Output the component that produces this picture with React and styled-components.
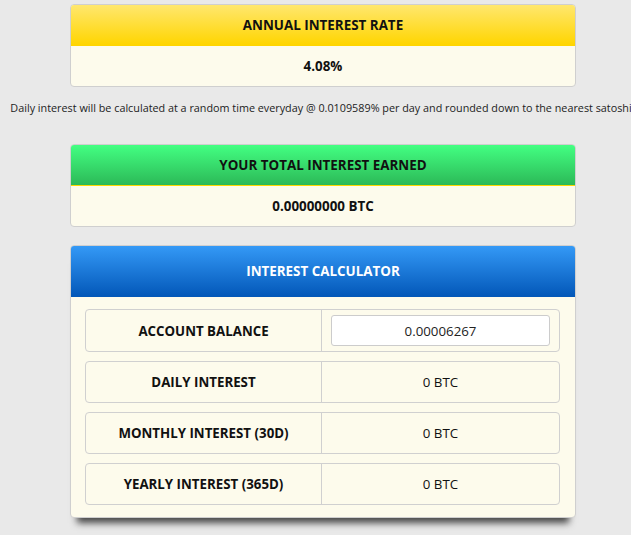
import React, { useState } from 'react';
import styled, { createGlobalStyle } from 'styled-components';

const GlobalStyle = createGlobalStyle`
  html, body {
    margin: 0;
    padding: 0;
    background: #e9e9e9;
    font-family: "Open Sans", "Liberation Sans", sans-serif;
    color: #111;
  }
`;

const HEADERS = {
  yellow: {
    bg: 'linear-gradient(to bottom, #ffe76e 0%, #ffd500 100%)',
    color: '#111',
    line: '#ffd500',
    height: 40,
  },
  green: {
    bg: 'linear-gradient(to bottom, #43ff82 0%, #2cb957 100%)',
    color: '#111',
    line: '#ffd700',
    height: 40,
  },
  blue: {
    bg: 'linear-gradient(to bottom, #3499f6 0%, #0358b9 100%)',
    color: '#fff',
    line: '#0358b9',
    height: 50,
  },
};

export default function App() {
  const [balance, setBalance] = useState('0.00006267');

  return (
    <>
      <GlobalStyle />
      <Page>
        <Card $gap={14}>
          <Header $tone="yellow">ANNUAL INTEREST RATE</Header>
          <Value>4.08%</Value>
        </Card>

        <Notice>
          <span>
            Daily interest will be calculated at a random time everyday @ 0.0109589% per day and rounded down to the nearest satoshi
          </span>
        </Notice>

        <Card $gap={18}>
          <Header $tone="green">YOUR TOTAL INTEREST EARNED</Header>
          <Value>0.00000000 BTC</Value>
        </Card>

        <Card $raised>
          <Header $tone="blue">INTEREST CALCULATOR</Header>
          <CalcBody>
            <Row $tall>
              <Label>ACCOUNT BALANCE</Label>
              <Cell>
                <Input value={balance} onChange={(e) => setBalance(e.target.value)} />
              </Cell>
            </Row>
            <Row>
              <Label>DAILY INTEREST</Label>
              <Cell>0 BTC</Cell>
            </Row>
            <Row>
              <Label>MONTHLY INTEREST (30D)</Label>
              <Cell>0 BTC</Cell>
            </Row>
            <Row>
              <Label>YEARLY INTEREST (365D)</Label>
              <Cell>0 BTC</Cell>
            </Row>
          </CalcBody>
        </Card>
      </Page>
    </>
  );
}

const Page = styled.div`
  width: 506px;
  padding: 4px 0 20px 70px;
  display: flex;
  flex-direction: column;
`;

const Card = styled.div`
  border: 1px solid #cfcfcf;
  border-radius: 4px;
  background: #fdfbec;
  margin-bottom: ${(p) => p.$gap || 0}px;
  box-shadow: ${(p) => (p.$raised ? '0 12px 7px -7px rgba(0, 0, 0, 0.7)' : 'none')};
`;

const Header = styled.div`
  height: ${(p) => HEADERS[p.$tone].height}px;
  display: flex;
  align-items: center;
  justify-content: center;
  background: ${(p) => HEADERS[p.$tone].bg};
  color: ${(p) => HEADERS[p.$tone].color};
  border-bottom: 1px solid ${(p) => HEADERS[p.$tone].line};
  border-radius: 3px 3px 0 0;
  font-size: 13.4px;
  font-weight: 700;
`;

const Value = styled.div`
  height: 40px;
  display: flex;
  align-items: center;
  justify-content: center;
  font-size: 13.4px;
  font-weight: 700;
`;

const Notice = styled.div`
  display: flex;
  justify-content: center;
  margin: 0 0 29px;
  padding-right: 4px;
  font-size: 10.8px;
  line-height: 14px;
  color: #222;
  white-space: nowrap;
`;

const CalcBody = styled.div`
  padding: 12px 15px 12px 14px;
  display: flex;
  flex-direction: column;
  gap: 9px;
`;

const Row = styled.div`
  display: grid;
  grid-template-columns: 236px 1fr;
  height: ${(p) => (p.$tall ? 43 : 42)}px;
  border: 1px solid #d0d0d0;
  border-radius: 4px;
  box-sizing: border-box;
`;

const Label = styled.div`
  display: flex;
  align-items: center;
  justify-content: center;
  border-right: 1px solid #d0d0d0;
  font-size: 13.3px;
  font-weight: 700;
`;

const Cell = styled.div`
  display: flex;
  align-items: center;
  justify-content: center;
  padding: 0 9px;
  font-size: 13.3px;
`;

const Input = styled.input`
  width: 100%;
  height: 31px;
  box-sizing: border-box;
  border: 1px solid #cccccc;
  border-radius: 3px;
  background: #fff;
  text-align: center;
  font-family: "Open Sans", "Liberation Sans", sans-serif;
  font-size: 13.3px;
  color: #222;
  outline: none;
`;
